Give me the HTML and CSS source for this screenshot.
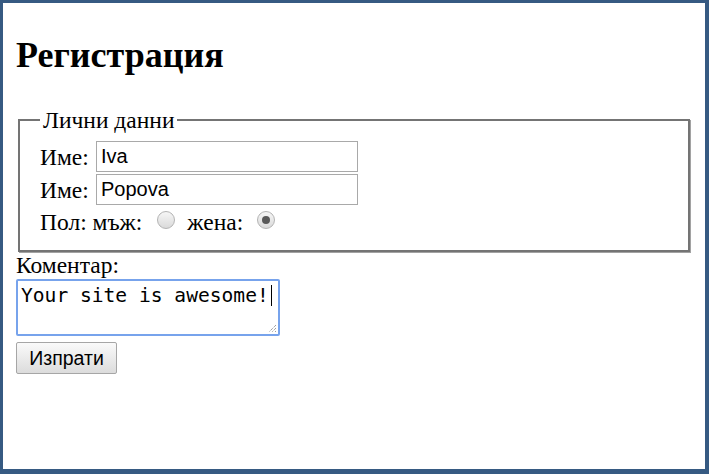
FILE: index.html
```html
<!DOCTYPE html>
<html>
<head>
<meta charset="utf-8">
<link rel="stylesheet" href="styles.css">
</head>
<body>
<div class="frame">
  <h1 class="title">Регистрация</h1>
  <fieldset class="box">
    <legend class="legend">Лични данни</legend>
    <div class="row">
      <span class="lbl name-lbl">Име:</span>
      <input class="field" type="text" value="Iva">
    </div>
    <div class="row">
      <span class="lbl name-lbl">Име:</span>
      <input class="field" type="text" value="Popova">
    </div>
    <div class="row gender">
      <span class="lbl">Пол: мъж:</span>
      <span class="radio"></span>
      <span class="lbl">жена:</span>
      <span class="radio on"></span>
    </div>
  </fieldset>
  <div class="comment-lbl">Коментар:</div>
  <div class="area">Your site is awesome!<span class="caret"></span>
    <svg class="grip" width="10" height="10" viewBox="0 0 10 10"><path d="M9 2 L2 9 M9 5 L5 9 M9 8 L8 9" stroke="#777" stroke-width="1" stroke-dasharray="1 1" fill="none"/></svg>
  </div>
  <button class="btn">Изпрати</button>
</div>
</body>
</html>
```
FILE: styles.css
```css
html, body { margin: 0; padding: 0; }
body { font-family: "Liberation Serif", serif; font-size: 23.5px; color: #000; background: #fff; }
.frame {
  width: 709px; height: 474px; box-sizing: border-box;
  border-style: solid; border-color: #365a82;
  border-width: 3px 4px 5px 3px;
  padding: 0 0 0 13px;
  display: flex; flex-direction: column; align-items: flex-start;
}
.title { font-size: 36px; font-weight: bold; margin: 32px 0 0 0; line-height: 40px; }
.box {
  margin: 32px 0 0 2px; width: 672px; box-sizing: border-box;
  border: 2px solid #747474;
  box-shadow: 1px 1px 0 #a2a2a2;
  padding: 8px 0 13px 20px;
}
.legend { padding: 0 3px 0 3px; margin-left: 0; line-height: 26px; font-size: 23.5px; }
.row { display: flex; align-items: center; height: 31px; }
.row + .row { margin-top: 2px; }
.lbl { line-height: 26px; flex: none; }
.name-lbl { width: 56px; }
.field {
  width: 262px; height: 31px; box-sizing: border-box; margin: 0;
  border: 1px solid #a9a9a9; padding: 0 4px;
  font-family: "Liberation Sans", sans-serif; font-size: 20px; color: #000;
}
.gender { height: 30px; margin-top: 1px; align-items: flex-start; }
.gender .lbl { margin-top: 2px; }
.radio {
  width: 18px; height: 18px; box-sizing: border-box; border-radius: 50%;
  border: 1px solid #b3b3b3; background: linear-gradient(#f6f6f6, #dadada);
  margin: 4px 12px 0 15px; position: relative; flex: none;
}
.radio.on { margin-left: 14px; }
.radio.on::after {
  content: ""; position: absolute; left: 4px; top: 4px; width: 8px; height: 8px;
  border-radius: 50%; background: #595959;
}
.comment-lbl { margin-top: 0; line-height: 26px; }
.area {
  margin-top: 1px; width: 264px; height: 57px; box-sizing: border-box;
  border: 2px solid #77a3ec; border-radius: 2px; position: relative;
  font-family: "DejaVu Sans Mono", monospace; font-size: 19.6px; line-height: 22px;
  padding: 4px 0 0 3px; white-space: pre;
}
.caret { display: inline-block; width: 1px; height: 21px; background: #000; vertical-align: -4px; margin-left: 2px; }
.grip { position: absolute; right: 1px; bottom: 1px; }
.btn {
  margin-top: 6px; width: 101px; height: 32px; box-sizing: border-box;
  border: 1px solid #a6a6a6; border-radius: 2px;
  background: linear-gradient(#fafafa, #dcdcdc);
  font-family: "Liberation Sans", sans-serif; font-size: 19.5px; color: #000; padding: 0;
}
```
